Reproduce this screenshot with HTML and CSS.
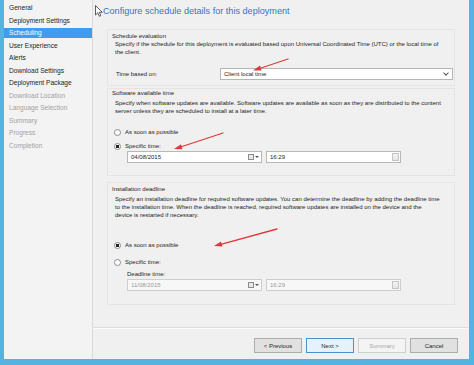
FILE: index.html
```html
<!DOCTYPE html>
<html lang="en">
	<head>
		<meta charset="UTF-8" />
		<meta name="viewport" content="width=device-width, initial-scale=1.0" />
		<link rel="stylesheet" href="styles.css">
	</head>
	<body>
		<div class="window">
			<!-- Wizard steps -->
			<nav class="steps">
				<div class="step">General</div>
				<div class="step">Deployment Settings</div>
				<div class="step active">Scheduling</div>
				<div class="step">User Experience</div>
				<div class="step">Alerts</div>
				<div class="step">Download Settings</div>
				<div class="step">Deployment Package</div>
				<div class="step off">Download Location</div>
				<div class="step off">Language Selection</div>
				<div class="step off">Summary</div>
				<div class="step off">Progress</div>
				<div class="step off">Completion</div>
			</nav>

			<!-- Page -->
			<main class="page">
				<h1 class="headline">
					<svg class="cursor" width="8" height="12" viewBox="0 0 8 12"><path d="M0.5 0.5 L0.5 10 L2.8 7.8 L4.4 11.3 L5.8 10.7 L4.3 7.3 L7.3 7.3 Z" fill="#fff" stroke="#333" stroke-width="0.8" stroke-linejoin="round"/></svg>
					Configure schedule details for this deployment
				</h1>

				<section class="group eval">
					<div class="group-title">Schedule evaluation</div>
					<p class="hint">Specify if the schedule for this deployment is evaluated based upon Universal Coordinated Time (UTC) or the local time of<br>the client.</p>
					<div class="field-row">
						<span class="field-label">Time based on:</span>
						<div class="select">Client local time<span class="chev"></span></div>
					</div>
				</section>

				<section class="group avail">
					<div class="group-title">Software available time</div>
					<p class="hint">Specify when software updates are available. Software updates are available as soon as they are distributed to the content<br>server unless they are scheduled to install at a later time.</p>
					<div class="radio first"><span class="dot"></span>As soon as possible</div>
					<div class="radio second"><span class="dot on"></span>Specific time:</div>
					<div class="pickers">
						<div class="input date">04/08/2015<span class="cal"></span><span class="drop"></span></div>
						<div class="input time">16:29<span class="spin"></span></div>
					</div>
				</section>

				<section class="group deadline">
					<div class="group-title">Installation deadline</div>
					<p class="hint">Specify an installation deadline for required software updates. You can determine the deadline by adding the deadline time<br>to the installation time. When the deadline is reached, required software updates are installed on the device and the<br>device is restarted if necessary.</p>
					<div class="radio first"><span class="dot on"></span>As soon as possible</div>
					<div class="radio second"><span class="dot"></span>Specific time:</div>
					<div class="sub-label">Deadline time:</div>
					<div class="pickers disabled">
						<div class="input date">11/08/2015<span class="cal"></span><span class="drop"></span></div>
						<div class="input time">16:29<span class="spin"></span></div>
					</div>
				</section>

				<footer class="buttons">
					<button class="btn">&lt; Previous</button>
					<button class="btn default">Next &gt;</button>
					<button class="btn" disabled>Summary</button>
					<button class="btn">Cancel</button>
				</footer>
			</main>
		</div>

		<!-- Red annotation arrows -->
		<svg class="arrows" width="474" height="365" viewBox="0 0 474 365">
			<g stroke="#dd3b3b" stroke-width="1.3" fill="#dd3b3b" stroke-linecap="round">
				<line x1="288" y1="59" x2="258" y2="69" />
				<polygon points="253,70.5 260,65.5 261.5,70.5" stroke="none" />
				<line x1="223" y1="133" x2="179" y2="147.5" />
				<polygon points="174,149 181,144.2 182.4,149.2" stroke="none" />
				<line x1="277" y1="229" x2="219" y2="244.8" />
				<polygon points="214,246 221,241.4 222.3,246.4" stroke="none" />
			</g>
		</svg>
	</body>
</html>
```

FILE: styles.css
```css
body {
	margin: 0;
	width: 474px;
	height: 365px;
	background: #55b3e2;
	font-family: "Liberation Sans", Arial, sans-serif;
	color: #1e1e1e;
	overflow: hidden;
	position: relative;
}

.window {
	display: flex;
	width: 464px;
	height: 359px;
	margin-left: 4px;
	background: #f0f0f0;
	border-right: 1px solid #e8f4fb;
}

.steps {
	width: 88px;
	padding-top: 3px;
	background: #f3f3f3;
	border-right: 1px solid #dadada;
}

.step {
	height: 10px;
	line-height: 10px;
	margin-bottom: 2.5px;
	padding-left: 5px;
	font-size: 6.6px;
	white-space: nowrap;
}

.step.active {
	background: #3f9cf0;
	color: #ffffff;
}

.step.off {
	color: #a2a2a2;
}

.page {
	flex: 1;
	display: flex;
	flex-direction: column;
}

.headline {
	display: flex;
	align-items: center;
	margin: 4px 0 0 2px;
	height: 14px;
	font-size: 9.1px;
	font-weight: normal;
	color: #3a73c2;
	white-space: nowrap;
}

.group {
	box-sizing: border-box;
	margin: 0 13px 0 14px;
	padding-left: 4px;
	border: 1px solid #e4e4e4;
	font-size: 6px;
	white-space: nowrap;
}

.group.eval {
	margin-top: 11px;
	height: 57px;
	padding-top: 2px;
}

.group.avail {
	margin-top: 2px;
	height: 88px;
}

.group.deadline {
	margin-top: 6px;
	height: 123px;
	padding-top: 2px;
}

.group-title {
	line-height: 8px;
}

.hint {
	margin: 0;
	padding-left: 3px;
	line-height: 8px;
}

.avail .hint,
.deadline .hint {
	margin-top: 2px;
}

.field-row {
	display: flex;
	align-items: center;
	margin-top: 12px;
}

.field-label {
	width: 104px;
	padding-left: 4px;
}

.select {
	position: relative;
	box-sizing: border-box;
	width: 233px;
	height: 12px;
	line-height: 10px;
	padding-left: 3px;
	background: #ffffff;
	border: 1px solid #b5b5b5;
}

.chev {
	position: absolute;
	right: 4px;
	top: 2px;
	width: 3px;
	height: 3px;
	border-right: 1px solid #555;
	border-bottom: 1px solid #555;
	transform: rotate(45deg);
}

.radio {
	display: flex;
	align-items: center;
	height: 10px;
	padding-left: 2px;
}

.avail .radio.first {
	margin-top: 12px;
}

.avail .radio.second {
	margin-top: 4px;
}

.deadline .radio.first {
	margin-top: 21px;
}

.deadline .radio.second {
	margin-top: 7px;
}

.dot {
	box-sizing: border-box;
	width: 7px;
	height: 7px;
	margin-right: 4px;
	border: 1px solid #8a8a8a;
	border-radius: 50%;
	background: #ffffff;
}

.dot.on {
	background: radial-gradient(circle, #222 0 1.6px, #ffffff 1.9px);
}

.sub-label {
	margin-top: 3px;
	padding-left: 15px;
	line-height: 8px;
}

.pickers {
	display: flex;
	gap: 4px;
	padding-left: 15px;
}

.deadline .pickers {
	margin-top: 1px;
}

.input {
	position: relative;
	box-sizing: border-box;
	width: 135px;
	height: 12px;
	line-height: 10px;
	padding-left: 3px;
	background: #ffffff;
	border: 1px solid #b8b8b8;
}

.cal {
	position: absolute;
	right: 7px;
	top: 2px;
	box-sizing: border-box;
	width: 6px;
	height: 6px;
	border: 1px solid #8c8c8c;
	background: #e8e8e8;
}

.drop {
	position: absolute;
	right: 2px;
	top: 4px;
	border-left: 2px solid transparent;
	border-right: 2px solid transparent;
	border-top: 2px solid #555;
}

.spin {
	position: absolute;
	right: 1px;
	top: 1px;
	box-sizing: border-box;
	width: 7px;
	height: 8px;
	border: 1px solid #c4c4c4;
	background: linear-gradient(#f4f4f4, #e4e4e4);
}

.disabled .input {
	color: #9a9a9a;
	background: #f7f7f7;
	border-color: #cdcdcd;
}

.buttons {
	display: flex;
	justify-content: flex-end;
	gap: 4px;
	margin-top: 22px;
	padding: 10px 10px 0 0;
	border-top: 1px solid #dcdcdc;
	box-shadow: inset 0 1px 0 #fbfbfb;
}

.btn {
	box-sizing: border-box;
	width: 48px;
	height: 15px;
	padding: 0;
	font-family: "Liberation Sans", Arial, sans-serif;
	font-size: 6px;
	color: #1e1e1e;
	background: #e1e1e1;
	border: 1px solid #adadad;
}

.btn.default {
	background: #e5f1fb;
	border-color: #4d8fc9;
}

.btn:disabled {
	color: #a8a8a8;
	background: #f4f4f4;
	border-color: #cfcfcf;
}

.arrows {
	position: absolute;
	top: 0;
	left: 0;
	pointer-events: none;
}
```
